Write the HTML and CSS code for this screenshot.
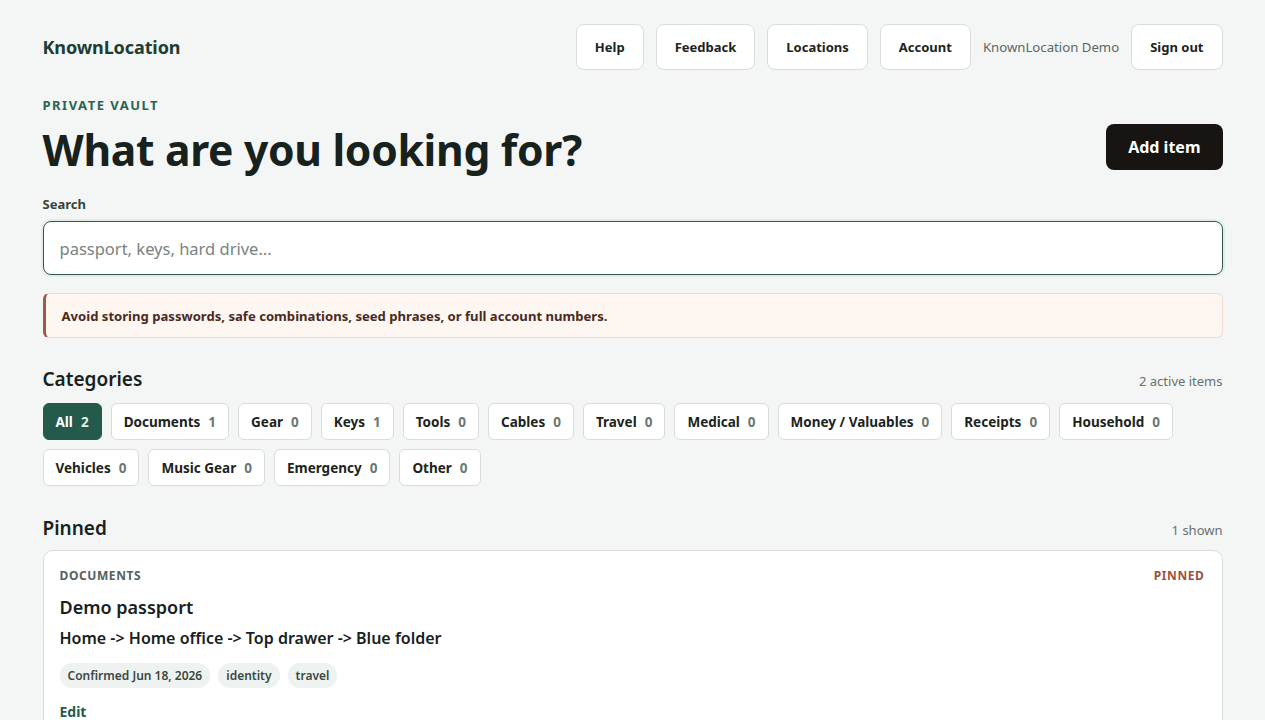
FILE: index.html
```html
<!DOCTYPE html>
<html lang="en">
<head>
<meta charset="utf-8">
<title>KnownLocation</title>
<link rel="stylesheet" href="styles.css">
</head>
<body>
<div class="page">
  <header class="topbar">
    <div class="brand">KnownLocation</div>
    <nav class="nav">
      <a class="btn">Help</a>
      <a class="btn">Feedback</a>
      <a class="btn">Locations</a>
      <a class="btn">Account</a>
      <span class="user">KnownLocation Demo</span>
      <a class="btn">Sign out</a>
    </nav>
  </header>

  <section class="hero">
    <div>
      <div class="eyebrow">PRIVATE VAULT</div>
      <h1 class="title">What are you looking for?</h1>
    </div>
    <a class="btn-primary">Add item</a>
  </section>

  <label class="label" for="q">Search</label>
  <input id="q" class="search" type="text" placeholder="passport, keys, hard drive...">

  <div class="notice">Avoid storing passwords, safe combinations, seed phrases, or full account numbers.</div>

  <div class="section-head">
    <h2 class="h2">Categories</h2>
    <span class="meta">2 active items</span>
  </div>
  <div class="chips">
    <a class="chip active">All <span class="count">2</span></a>
    <a class="chip">Documents <span class="count">1</span></a>
    <a class="chip">Gear <span class="count">0</span></a>
    <a class="chip">Keys <span class="count">1</span></a>
    <a class="chip">Tools <span class="count">0</span></a>
    <a class="chip">Cables <span class="count">0</span></a>
    <a class="chip">Travel <span class="count">0</span></a>
    <a class="chip">Medical <span class="count">0</span></a>
    <a class="chip">Money / Valuables <span class="count">0</span></a>
    <a class="chip">Receipts <span class="count">0</span></a>
    <a class="chip">Household <span class="count">0</span></a>
    <a class="chip">Vehicles <span class="count">0</span></a>
    <a class="chip">Music Gear <span class="count">0</span></a>
    <a class="chip">Emergency <span class="count">0</span></a>
    <a class="chip">Other <span class="count">0</span></a>
  </div>

  <div class="section-head pinned-head">
    <h2 class="h2">Pinned</h2>
    <span class="meta">1 shown</span>
  </div>
  <article class="card">
    <div class="card-top">
      <span class="cat">DOCUMENTS</span>
      <span class="pin">PINNED</span>
    </div>
    <h3 class="item-name">Demo passport</h3>
    <div class="path">Home -&gt; Home office -&gt; Top drawer -&gt; Blue folder</div>
    <div class="tags">
      <span class="tag">Confirmed Jun 18, 2026</span>
      <span class="tag">identity</span>
      <span class="tag">travel</span>
    </div>
    <a class="edit">Edit</a>
  </article>
</div>
</body>
</html>
```

FILE: styles.css
```css
* { box-sizing: border-box; }
html, body { margin: 0; padding: 0; }
body {
  background: #f4f6f5;
  color: #17211d;
  font-family: "Noto Sans", "Open Sans", sans-serif;
}
a { text-decoration: none; color: inherit; }
.page {
  max-width: 1180px;
  margin: 0 auto;
  padding: 24px 0 40px;
}
.topbar {
  display: flex;
  justify-content: space-between;
  align-items: center;
}
.brand {
  font-size: 18px;
  font-weight: 700;
  color: #1c3d33;
  letter-spacing: -0.1px;
}
.nav {
  display: flex;
  align-items: center;
  gap: 12px;
}
.btn {
  display: inline-flex;
  align-items: center;
  height: 46px;
  padding: 0 18px;
  background: #fff;
  border: 1px solid #d8dddb;
  border-radius: 8px;
  font-size: 13px;
  font-weight: 700;
  color: #1b2420;
}
.user {
  font-size: 13.2px;
  color: #5b6662;
}
.hero {
  display: flex;
  justify-content: space-between;
  align-items: flex-end;
  margin-top: 26px;
}
.eyebrow {
  font-size: 13px;
  font-weight: 700;
  letter-spacing: 1.5px;
  color: #2b6352;
}
.title {
  margin: 7px 0 0;
  font-size: 42.6px;
  line-height: 56px;
  font-weight: 700;
  color: #17211d;
  letter-spacing: -0.3px;
}
.btn-primary {
  display: inline-flex;
  align-items: center;
  height: 46px;
  padding: 0 22px;
  margin-bottom: 7px;
  background: #171411;
  color: #fff;
  border-radius: 8px;
  font-size: 16px;
  font-weight: 700;
}
.label {
  display: block;
  margin-top: 18px;
  font-size: 13px;
  font-weight: 700;
  color: #33453f;
}
.search {
  display: block;
  width: 100%;
  height: 54px;
  margin-top: 8px;
  padding: 0 16px;
  border: 1.5px solid #2c5b4d;
  border-radius: 8px;
  background: #fff;
  font-family: inherit;
  font-size: 16.5px;
  color: #17211d;
  box-shadow: 0 0 0 2px #e2ece8;
  outline: none;
}
.search::placeholder { color: #7a8280; }
.notice {
  margin-top: 18px;
  height: 45px;
  display: flex;
  align-items: center;
  padding: 0 16px;
  background: #fdf6f1;
  border: 1px solid #efdccf;
  border-left: 3px solid #a05a44;
  border-radius: 6px;
  font-size: 13.1px;
  font-weight: 700;
  color: #4a2a1f;
}
.section-head {
  display: flex;
  justify-content: space-between;
  align-items: baseline;
  margin-top: 28px;
}
.h2 {
  margin: 0;
  font-size: 19px;
  font-weight: 600;
  color: #17211d;
}
.meta {
  font-size: 13px;
  color: #66716d;
}
.chips {
  display: flex;
  flex-wrap: wrap;
  gap: 9px 9px;
  margin-top: 11px;
}
.chip {
  display: inline-flex;
  align-items: center;
  gap: 8px;
  height: 37px;
  padding: 0 12px;
  background: #fff;
  border: 1px solid #d8dddb;
  border-radius: 6px;
  font-size: 13.5px;
  font-weight: 700;
  color: #1b2420;
}
.chip .count { color: #6c7773; }
.chip.active {
  background: #245a4b;
  border-color: #245a4b;
  color: #fff;
}
.chip.active .count { color: #e3ece8; }
.pinned-head { margin-top: 29px; }
.card {
  margin-top: 9px;
  background: #fff;
  border: 1px solid #d8dddb;
  border-radius: 10px;
  padding: 16px 17px 20px 16px;
}
.card-top {
  display: flex;
  justify-content: space-between;
  align-items: center;
}
.cat {
  font-size: 12px;
  font-weight: 700;
  letter-spacing: 0.6px;
  color: #52625c;
}
.pin {
  font-size: 12px;
  font-weight: 700;
  letter-spacing: 0.6px;
  color: #a0503a;
}
.item-name {
  margin: 11px 0 0;
  font-size: 18px;
  font-weight: 600;
  color: #17211d;
}
.path {
  margin-top: 8px;
  font-size: 16px;
  font-weight: 600;
  color: #17211d;
}
.tags {
  display: flex;
  gap: 8px;
  margin-top: 14px;
}
.tag {
  display: inline-flex;
  align-items: center;
  height: 25px;
  padding: 0 8px;
  background: #eef2f0;
  border-radius: 12px;
  font-size: 12px;
  font-weight: 600;
  color: #3a4843;
}
.edit {
  display: inline-block;
  margin-top: 14px;
  font-size: 14px;
  font-weight: 700;
  color: #245a4b;
}
```
